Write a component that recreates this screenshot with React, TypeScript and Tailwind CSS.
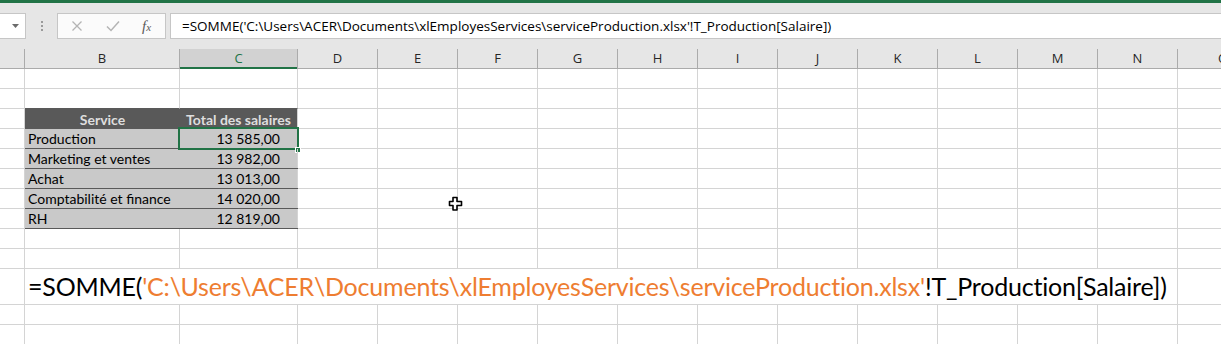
import React from "react";

const cols = ["B", "C", "D", "E", "F", "G", "H", "I", "J", "K", "L", "M", "N"];
const widths: Record<string, string> = {
  B: "w-[155px]",
  C: "w-[118px]",
};

const rows = [
  { service: "Production", total: "13 585,00" },
  { service: "Marketing et ventes", total: "13 982,00" },
  { service: "Achat", total: "13 013,00" },
  { service: "Comptabilité et finance", total: "14 020,00" },
  { service: "RH", total: "12 819,00" },
];

const cellFont = { fontFamily: "Lato, 'Liberation Sans', sans-serif" };

function GridRow({ h = "h-[20px]", children }: { h?: string; children?: React.ReactNode }) {
  return <div className={`flex ${h} border-b border-[#d4d4d4]`}>{children}</div>;
}

function EmptyCells({ from }: { from: number }) {
  return (
    <>
      {cols.slice(from).map((c) => (
        <div key={c} className={`${widths[c] ?? "w-[80px]"} shrink-0 border-r border-[#d4d4d4]`} />
      ))}
      <div className="flex-1" />
    </>
  );
}

function CursorIcon() {
  return (
    <svg className="absolute left-[448px] top-[196px]" width="15" height="16" viewBox="0 0 15 16">
      <path
        d="M5 1.5h4v4h4.5v4H9v4.5H5V9.5H1.5v-4H5z"
        fill="#fff"
        stroke="#000"
        strokeWidth="1.6"
        strokeLinejoin="round"
      />
    </svg>
  );
}

export default function App() {
  return (
    <div className="relative w-[1221px] h-[344px] overflow-hidden bg-white select-none">
      <div className="h-[3px] bg-[#217346]" />
      {/* formula bar */}
      <div className="h-[46px] bg-[#e6e6e6] flex items-start pt-[10px]">
        <div className="w-[26px] h-[26px] bg-white border border-l-0 border-[#c6c6c6] flex items-center justify-end pr-[6px]">
          <svg width="7" height="4" viewBox="0 0 7 4">
            <path d="M0 0h7L3.5 4z" fill="#6b6b6b" />
          </svg>
        </div>
        <div className="w-[31px] h-[26px] flex flex-col items-center justify-center gap-[2px]">
          <span className="w-[2px] h-[2px] bg-[#9a9a9a]" />
          <span className="w-[2px] h-[2px] bg-[#9a9a9a]" />
          <span className="w-[2px] h-[2px] bg-[#9a9a9a]" />
        </div>
        <div className="w-[109px] h-[26px] bg-[#fbfbfb] border border-[#c6c6c6] flex items-center">
          <svg className="ml-[13px]" width="12" height="12" viewBox="0 0 12 12">
            <path d="M1.5 1.5l9 9M10.5 1.5l-9 9" stroke="#b4b4b4" strokeWidth="1.3" />
          </svg>
          <svg className="ml-[23px]" width="14" height="12" viewBox="0 0 14 12">
            <path d="M1 6.5l4 4L13 1.5" stroke="#b4b4b4" strokeWidth="1.5" fill="none" />
          </svg>
          <span
            className="ml-[22px] text-[15px] italic text-[#5a5a5a] leading-none"
            style={{ fontFamily: "'Liberation Serif', serif" }}
          >
            f<span className="text-[11px]">x</span>
          </span>
        </div>
        <div
          className="ml-[4px] flex-1 h-[26px] bg-white border border-r-0 border-[#c6c6c6] flex items-center pl-[11px] text-[13.5px] text-black whitespace-nowrap"
          style={{ fontFamily: "'Open Sans', sans-serif" }}
        >
          =SOMME('C:\Users\ACER\Documents\xlEmployesServices\serviceProduction.xlsx'!T_Production[Salaire])
        </div>
      </div>
      {/* column headers */}
      <div
        className="flex h-[20px] bg-[#e6e6e6] border-b border-[#ababab] text-[13px] text-[#262626]"
        style={{ fontFamily: "'Open Sans', sans-serif" }}
      >
        <div className="w-[25px] shrink-0 border-r border-[#ababab]" />
        {cols.map((c) =>
          c === "C" ? (
            <div
              key={c}
              className="w-[118px] shrink-0 bg-[#d2d2d2] border-r border-[#ababab] flex items-center justify-center relative text-[#217346]"
            >
              {c}
              <div className="absolute left-0 right-0 bottom-[-1px] h-[2px] bg-[#217346]" />
            </div>
          ) : (
            <div
              key={c}
              className={`${widths[c] ?? "w-[80px]"} shrink-0 border-r border-[#ababab] flex items-center justify-center`}
            >
              {c}
            </div>
          )
        )}
        <div className="flex-1 flex items-center pl-[40px]">O</div>
      </div>
      {/* grid */}
      <div className="text-[14px] text-black whitespace-nowrap" style={cellFont}>
        <GridRow>
          <div className="w-[25px] shrink-0 border-r border-[#d4d4d4]" />
          <EmptyCells from={0} />
        </GridRow>
        <div className="flex h-[20px] border-b border-[#d4d4d4]">
          <div className="w-[25px] shrink-0 border-r border-[#d4d4d4]" />
          <div className="w-[273px] shrink-0 flex -mb-px">
            <div className="w-[155px] border-r border-[#d4d4d4] border-b border-b-[#595959]" />
            <div className="w-[118px] border-r border-[#d4d4d4] border-b border-b-[#595959]" />
          </div>
          <EmptyCells from={2} />
        </div>
        <GridRow>
          <div className="w-[25px] shrink-0 border-r border-[#d4d4d4]" />
          <div className="w-[273px] shrink-0 flex bg-[#595959] text-[#dedede] font-bold -mb-px">
            <div className="w-[155px] flex items-center justify-center">Service</div>
            <div className="w-[118px] border-r border-[#d4d4d4] flex items-center justify-center">
              Total des salaires
            </div>
          </div>
          <EmptyCells from={2} />
        </GridRow>
        {rows.map((r, i) => (
          <GridRow key={r.service}>
            <div className="w-[25px] shrink-0 border-r border-[#d4d4d4]" />
            <div className="w-[273px] shrink-0 flex bg-[#c9c9c9] border-b border-[#595959] -mb-px">
              <div className="w-[155px] flex items-center pl-[3px]">{r.service}</div>
              <div className="w-[118px] relative border-r border-[#d4d4d4] flex items-center justify-end pr-[17px]">
                {r.total}
                {i === 0 && (
                  <>
                    <div className="absolute left-[-2px] top-[-2px] right-[-2px] bottom-[-2px] border-2 border-[#217346]" />
                    <div className="absolute right-[-4px] bottom-[-5px] w-[6px] h-[6px] bg-[#217346] border border-white" />
                  </>
                )}
              </div>
            </div>
            <EmptyCells from={2} />
          </GridRow>
        ))}
        <GridRow>
          <div className="w-[25px] shrink-0 border-r border-[#d4d4d4]" />
          <EmptyCells from={0} />
        </GridRow>
        <GridRow>
          <div className="w-[25px] shrink-0 border-r border-[#d4d4d4]" />
          <EmptyCells from={0} />
        </GridRow>
        <GridRow h="h-[36px]">
          <div className="w-[25px] shrink-0 border-r border-[#d4d4d4]" />
          <div className="w-[1153px] shrink-0 border-r border-[#d4d4d4] flex items-center pl-[3px] text-[25px] whitespace-nowrap tracking-[-0.2px]">
            <span>=SOMME(</span>
            <span className="text-[#ee7d31]">'C:\Users\ACER\Documents\xlEmployesServices\serviceProduction.xlsx'</span>
            <span>!T_Production[Salaire])</span>
          </div>
          <div className="flex-1" />
        </GridRow>
        <GridRow>
          <div className="w-[25px] shrink-0 border-r border-[#d4d4d4]" />
          <EmptyCells from={0} />
        </GridRow>
        <GridRow>
          <div className="w-[25px] shrink-0 border-r border-[#d4d4d4]" />
          <EmptyCells from={0} />
        </GridRow>
      </div>
      <CursorIcon />
    </div>
  );
}
